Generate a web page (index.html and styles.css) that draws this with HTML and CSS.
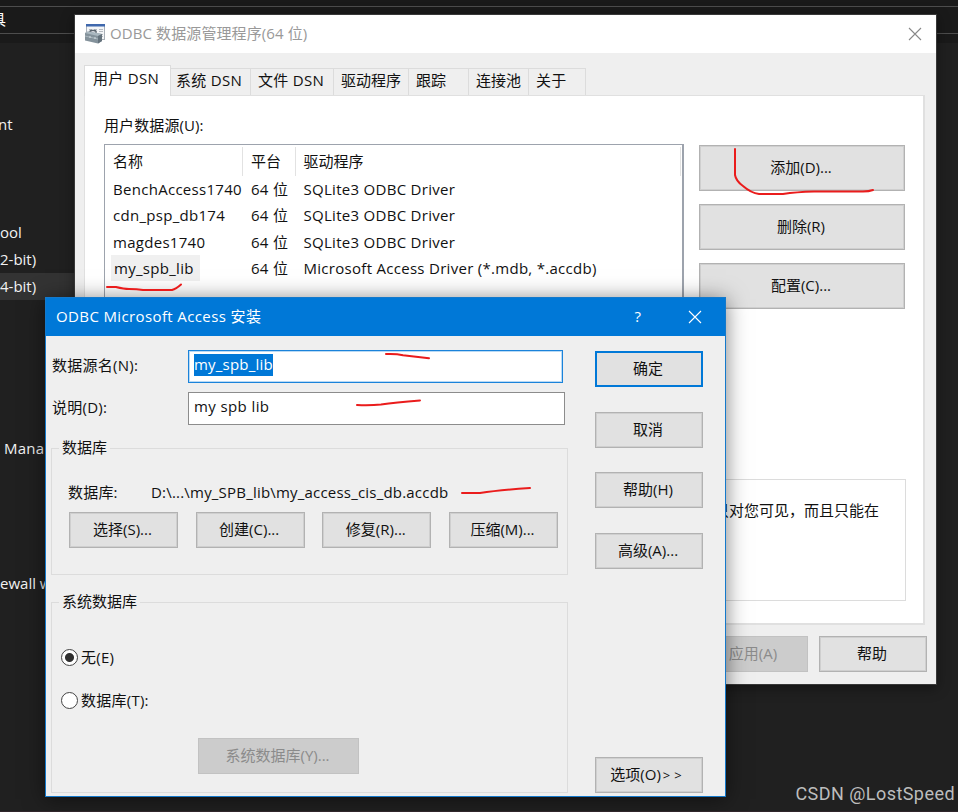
FILE: index.html
```html
<!DOCTYPE html>
<html lang="zh-CN">
<head>
  <meta charset="UTF-8">
  <meta name="viewport" content="width=device-width, initial-scale=1.0">
  <title>ODBC 数据源管理程序(64 位)</title>
  <link rel="stylesheet" href="styles.css">
</head>
<body>
  <div class="desktop">
    <div class="topbar"><span>具</span></div>
    <ul class="menu">
      <li class="cut">nt</li>
      <li></li>
      <li></li>
      <li></li>
      <li>ool</li>
      <li>2-bit)</li>
      <li class="active">4-bit)</li>
      <li></li>
      <li></li>
      <li></li>
      <li></li>
      <li></li>
      <li class="indent">Mana</li>
      <li></li>
      <li></li>
      <li></li>
      <li></li>
      <li>ewall w</li>
    </ul>

    <!-- ODBC administrator -->
    <div class="window admin">
      <div class="admin-title">
        <svg class="app-icon" width="20" height="20" viewBox="0 0 20 20">
          <rect x="1.5" y=".5" width="18" height="15" fill="#f3f5f7" stroke="#a9b0b8"/>
          <rect x="1" y="0" width="19" height="2.5" fill="#3f68ad"/>
          <path d="M4 5.5h3M9 5.5h3M14 5.5h4M4 7.5h3M9 7.5h3M14 7.5h4M14 10.5h4M16 12.5h2" stroke="#b4bac1"/>
          <path d="M5 9V7.5q0-1 1-1h4q1 0 1 1V10" fill="none" stroke="#5b666f" stroke-width="1.3"/>
          <path d="M0 9l3-1.500 14 2.500v7l-4 2.500-13-3z" fill="#84929b"/>
          <path d="M0 9l3-1.500 14 2.500-4 2z" fill="#aab8c0"/>
          <path d="M0 12l13 3 4-2.500" fill="none" stroke="#a9b6bd"/>
          <path d="M13 12l4-2v7l-4 2.500z" fill="#64727c"/>
          <path d="M5 12v2M10 13v2" stroke="#d3dde2"/>
        </svg>
        <span>ODBC 数据源管理程序(64 位)</span>
        <svg class="close" width="14" height="14" viewBox="0 0 14 14"><path d="M1 1l12 12M13 1L1 13"/></svg>
      </div>
      <div class="tabs">
        <div class="tab selected">用户 DSN</div>
        <div class="tab t-sys">系统 DSN</div>
        <div class="tab t-file">文件 DSN</div>
        <div class="tab t-drv">驱动程序</div>
        <div class="tab t-trace">跟踪</div>
        <div class="tab t-pool">连接池</div>
        <div class="tab t-about">关于</div>
      </div>
      <div class="panel">
        <div class="panel-label">用户数据源(U):</div>
        <div class="panel-main">
          <div class="list">
            <div class="row head"><span>名称</span><span>平台</span><span>驱动程序</span></div>
            <div class="row"><span>BenchAccess1740</span><span>64 位</span><span>SQLite3 ODBC Driver</span></div>
            <div class="row"><span>cdn_psp_db174</span><span>64 位</span><span>SQLite3 ODBC Driver</span></div>
            <div class="row"><span>magdes1740</span><span>64 位</span><span>SQLite3 ODBC Driver</span></div>
            <div class="row"><span><b class="picked">my_spb_lib</b></span><span>64 位</span><span>Microsoft Access Driver (*.mdb, *.accdb)</span></div>
          </div>
          <div class="side-buttons">
            <button>添加(D)...</button>
            <button>删除(R)</button>
            <button>配置(C)...</button>
          </div>
        </div>
        <div class="info">用户数据源只对您可见，而且只能在</div>
      </div>
      <div class="admin-footer">
        <button disabled>应用(A)</button>
        <button>帮助</button>
      </div>
    </div>

    <!-- Access setup dialog -->
    <div class="window setup">
      <div class="setup-title">
        <span class="name">ODBC Microsoft Access 安装</span>
        <span class="help">?</span>
        <svg class="close" width="14" height="14" viewBox="0 0 14 14"><path d="M1 1l12 12M13 1L1 13"/></svg>
      </div>
      <div class="setup-body">
        <div class="form">
          <div class="field">
            <label>数据源名(N):</label>
            <div class="input focused"><span>my_spb_lib</span></div>
          </div>
          <div class="field">
            <label>说明(D):</label>
            <div class="input">my spb lib</div>
          </div>
          <fieldset class="db">
            <legend>数据库</legend>
            <div class="path"><span>数据库:</span><span>D:\...\my_SPB_lib\my_access_cis_db.accdb</span></div>
            <div class="db-buttons">
              <button>选择(S)...</button>
              <button>创建(C)...</button>
              <button>修复(R)...</button>
              <button>压缩(M)...</button>
            </div>
          </fieldset>
          <fieldset class="sysdb">
            <legend>系统数据库</legend>
            <div class="option"><i class="radio on"></i>无(E)</div>
            <div class="option"><i class="radio"></i>数据库(T):</div>
            <button disabled>系统数据库(Y)...</button>
          </fieldset>
        </div>
        <div class="actions">
          <button class="default">确定</button>
          <button>取消</button>
          <button>帮助(H)</button>
          <button>高级(A)...</button>
          <button class="last">选项(O)<span class="more">&gt;&gt;</span></button>
        </div>
      </div>
    </div>

    <!-- red pen marks -->
    <svg class="marks" width="958" height="812" viewBox="0 0 958 812">
      <path d="M735 149v26q1 6 8 11 8 7 16 8h24q13-2 31-2.500h49q6 0 10-1.500"/>
      <path d="M107 287h9q8 2 13 2 8 0 14 1h29q4-1 9-5.500"/>
      <path d="M386 354q10-.5 17 1.200l26 3"/>
      <path d="M357 405q14 .6 24-.6 14-2 39-4"/>
      <path d="M462 493h18q20-3 50-5"/>
    </svg>
    <div class="watermark">CSDN @LostSpeed</div>
  </div>
</body>
</html>
```
FILE: styles.css
```css
* {
  box-sizing: border-box;
}

body {
  margin: 0;
  font-family: "Open Sans", "Noto Sans CJK SC", sans-serif;
  font-size: 15px;
  line-height: 20px;
  color: #111;
}

.desktop {
  position: relative;
  width: 958px;
  height: 812px;
  overflow: hidden;
  background: #202020;
  border-bottom: 1px solid #30262b;
  white-space: nowrap;
}

.topbar {
  height: 43px;
  padding-top: 6px;
  background: #1a1a1a;
}

.topbar span {
  display: block;
  height: 28px;
  border-top: 1px solid #4d4d4d;
  border-bottom: 1px solid #4d4d4d;
  color: #fff;
  line-height: 24px;
  text-indent: -9px;
}

.menu {
  list-style: none;
  width: 300px;
  margin: 68px 0 0;
  padding: 0;
  color: #f2f2f2;
}

.menu li {
  height: 27px;
  line-height: 27px;
}

.menu .cut {
  text-indent: -2px;
}

.menu .indent {
  text-indent: 4px;
  letter-spacing: 0.2px;
}

.menu .active {
  background: #333;
}

.window {
  position: absolute;
  background: #efefef;
}

button {
  height: 36px;
  padding: 0 2px 2px 0;
  border: 1px solid #b2b2b2;
  box-shadow: inset 0 0 0 1px #cfcfcf;
  background: #e1e1e1;
  color: #111;
  font: inherit;
}

button:disabled {
  border-color: #c2c2c2;
  background: #ccc;
  box-shadow: none;
  color: #8b8b8b;
}

/* administrator window */
.admin {
  left: 74px;
  top: 14px;
  width: 863px;
  height: 671px;
  border: 1px solid #383838;
  box-shadow: 0 3px 12px rgba(0, 0, 0, 0.4);
}

.admin-title {
  display: flex;
  align-items: center;
  height: 38px;
  padding: 0 14px 1px 10px;
  background: #fff;
  color: #999;
}

.admin-title span {
  flex: 1;
  margin-left: 5px;
  padding-bottom: 1px;
  letter-spacing: 0.1px;
}

.close path {
  fill: none;
  stroke: #888;
  stroke-width: 1.1;
}

.tabs {
  display: flex;
  align-items: flex-end;
  height: 42px;
  padding-left: 9px;
  letter-spacing: 0.3px;
}

.tab {
  height: 27px;
  padding: 1px 0 0 7px;
  border: 1px solid #dcdcdc;
  border-left: 0;
  border-bottom: 0;
}

.tab.selected {
  position: relative;
  z-index: 1;
  width: 87px;
  height: 31px;
  margin-bottom: -1px;
  padding: 2px 0 0 8px;
  border-left: 1px solid #dcdcdc;
  background: #fff;
}

.t-sys {
  width: 80px;
  padding-left: 5px;
}

.t-file {
  width: 83px;
}

.t-drv {
  width: 75px;
  letter-spacing: 0;
}

.t-trace,
.t-pool {
  width: 60px;
  letter-spacing: 0;
}

.t-about {
  width: 57px;
}

.panel {
  width: 841px;
  height: 530px;
  margin-left: 9px;
  padding: 19px 17px 0 19px;
  border: 2px solid #e0e0e0;
  border-width: 1px 2px 2px 1px;
  background: #fff;
}

.panel-label {
  letter-spacing: 0.1px;
}

.panel-main {
  display: flex;
  justify-content: space-between;
  margin-top: 9px;
}

.list {
  width: 580px;
  height: 312px;
  border: 2px solid #9da3ad;
  border-width: 1px 2px 2px 1px;
  padding-top: 2px;
}

.row {
  display: grid;
  grid-template-columns: 138px 52.5px 1fr;
  height: 26.3px;
  line-height: 26px;
  letter-spacing: 0.29px;
}

.row span {
  padding-left: 8px;
}

.row.head {
  height: 29px;
  margin-right: 1px;
  line-height: 28px;
  letter-spacing: 0;
}

.row.head span {
  border-right: 1px solid #e2e2e2;
}

.picked {
  display: inline-block;
  margin-left: -2px;
  padding: 0 6px 0 3px;
  background: #f0f0f0;
  font-weight: normal;
}

.side-buttons {
  display: flex;
  flex-direction: column;
  gap: 13px;
  padding: 1px 1px 0 0;
}

.side-buttons button {
  width: 206px;
  height: 46px;
}

.info {
  height: 122px;
  margin-top: 23px;
  padding: 20px 26px 0 0;
  border: 1px solid #dcdcdc;
  text-align: right;
}

.admin-footer {
  display: flex;
  justify-content: flex-end;
  gap: 11px;
  padding: 11px 9px 0 0;
}

.admin-footer button {
  width: 108px;
}

/* setup dialog */
.setup {
  left: 45px;
  top: 297px;
  width: 681px;
  height: 500px;
  border: 1px solid #1479cb;
  box-shadow: 0 2px 20px rgba(0, 0, 0, 0.5);
}

.setup-title {
  display: flex;
  align-items: center;
  height: 38px;
  padding: 0 23px 0 10px;
  background: #0078d7;
  color: #fff;
}

.setup-title .name {
  flex: 1;
  padding-bottom: 2px;
  letter-spacing: 0.38px;
}

.setup-title .help {
  margin-right: 47px;
  padding-bottom: 2px;
}

.setup-title .close path {
  stroke: #fff;
}

.setup-body {
  display: flex;
  justify-content: space-between;
  padding: 14px 22px 0 5px;
}

.form {
  width: 517px;
}

.field {
  display: flex;
  align-items: flex-start;
  height: 42px;
}

.field label {
  width: 137px;
  padding: 5px 0 0 1px;
  letter-spacing: 0.25px;
}

.input {
  width: 377px;
  height: 33px;
  padding: 3px 5px;
  border: 1px solid #8c8c8c;
  background: #fff;
  letter-spacing: 0.4px;
}

.input.focused {
  width: 375px;
  border-color: #1b83da;
  box-shadow: inset 0 0 0 1px #b9daf5;
  letter-spacing: 0.2px;
}

.input.focused span {
  display: inline-block;
  height: 22px;
  background: #0078d7;
  color: #fff;
}

fieldset {
  margin: 0;
  padding: 0;
  border: 1px solid #dcdcdc;
}

legend {
  margin-left: 7px;
  padding: 0 3px 2px;
}

.db {
  height: 138px;
  margin-top: 3px;
}

.path {
  display: flex;
  margin-top: 23px;
  padding-left: 16px;
  letter-spacing: 0.2px;
}

.path span {
  width: 83px;
}

.db-buttons {
  display: flex;
  justify-content: space-between;
  margin-top: 10px;
  padding: 0 9px 0 17px;
}

.db-buttons button {
  width: 109px;
}

.sysdb {
  height: 202px;
  margin-top: 16px;
}

.option {
  display: flex;
  align-items: center;
  gap: 3px;
  height: 20px;
  margin: 34px 0 0 9px;
  letter-spacing: 0.25px;
}

.option + .option {
  margin-top: 23px;
}

.radio {
  width: 17px;
  height: 17px;
  border: 1.5px solid #444;
  border-radius: 50%;
  background: #fff;
}

.radio.on {
  background: radial-gradient(circle, #303030 4px, #fff 5px);
}

.sysdb button {
  display: block;
  width: 161px;
  margin: 28px 0 0 146px;
}

.actions {
  display: flex;
  flex-direction: column;
  gap: 24.5px;
  padding-top: 1px;
}

.actions button {
  width: 108px;
}

.actions .default {
  border: 2px solid #0078d7;
  box-shadow: none;
}

.actions .last {
  margin-top: 164px;
}

.more {
  margin-left: 2px;
  letter-spacing: 4px;
  font-size: 13px;
}

.marks {
  position: absolute;
  left: 0;
  top: 0;
  pointer-events: none;
}

.marks path {
  fill: none;
  stroke: #ea1c1c;
  stroke-width: 2;
  stroke-linecap: round;
  stroke-linejoin: round;
}

.watermark {
  position: absolute;
  right: 3px;
  bottom: 7px;
  color: #bdbdbd;
  font-family: Roboto, sans-serif;
  font-size: 18px;
  letter-spacing: 0.45px;
}
```
